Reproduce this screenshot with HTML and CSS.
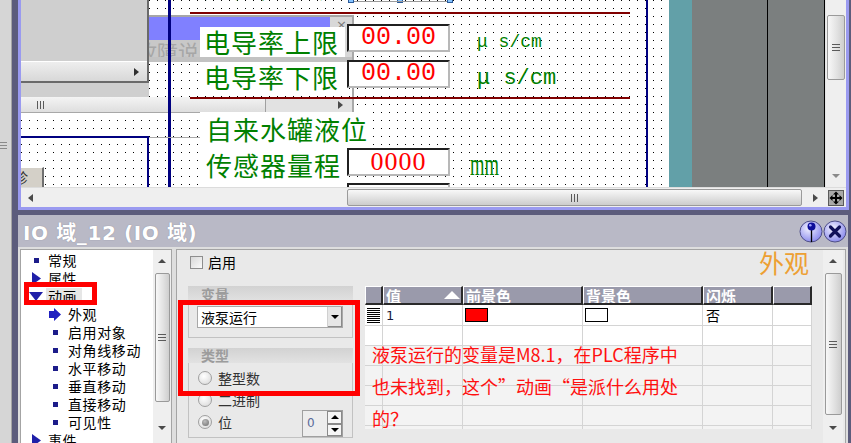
FILE: index.html
```html
<!DOCTYPE html>
<html lang="zh-CN">
<head>
<meta charset="UTF-8">
<title>IO 域_12 (IO 域)</title>
<link rel="stylesheet" href="styles.css">
</head>
<body>
<div class="app">
  <div class="dock"><span class="dock-grip"></span></div>
  <div class="main">
    <div class="editor">
      <div class="editor-row">
        <div class="canvas">
          <div class="obj top-title">运行情况说明</div>
          <span class="obj handle hd1"></span>
          <span class="obj handle hd2"></span>
          <span class="obj handle hd3"></span>
          <div class="obj sel-line"></div>

          <!-- screen window behind -->
          <div class="obj fwin-top"></div>
          <div class="obj fwin-bar"></div>
          <div class="obj fwin-close">×</div>
          <div class="obj fwin-text">故障说明</div>
          <div class="obj fwin-band"></div>
          <div class="obj fwin-vline"></div>
          <div class="obj fwin-scroll">
            <div class="fwin-thumb"><i class="grip-v"></i></div>
            <i class="tri right"></i>
          </div>

          <div class="obj gray-panel">
            <div class="gp-win"><div class="gp-scroll"><i class="tri right dark"></i></div></div>
          </div>

          <div class="obj label l1">电导率上限</div>
          <div class="obj label l2">电导率下限</div>
          <div class="obj label l4">传感器量程</div>
          <div class="obj label l3">自来水罐液位</div>

          <div class="obj io f1">00.00</div>
          <div class="obj io f2">00.00</div>
          <div class="obj io f3">0000</div>
          <div class="obj io f4"></div>

          <div class="obj unit u1">μ s/cm</div>
          <div class="obj unit u2">μ s/cm</div>
          <div class="obj unit u3">mm</div>

          <div class="obj rule r1"></div>
          <div class="obj rule r2"></div>

          <div class="obj diag-btn">诊</div>

          <div class="obj navy nv1"></div>
          <div class="obj navy nv2"></div>
          <div class="obj navy nh1"></div>
          <div class="obj navy nv3"></div>
          <div class="obj gline"></div>
        </div>
        <div class="teal"></div>
        <div class="outside"></div>
        <div class="vbar ed-vbar">
          <div class="arrow-box top"></div>
          <div class="thumb"><i class="grip-h"></i></div>
          <div class="spacer"></div>
          <div class="arrow-box"><i class="tri down light"></i></div>
        </div>
      </div>
      <div class="hscroll">
        <div class="harrow"><i class="tri left"></i></div>
        <div class="htrack"><div class="hthumb"><i class="grip-v"></i></div></div>
        <div class="harrow"><i class="tri right"></i></div>
        <div class="corner">
          <svg width="16" height="16" viewBox="0 0 16 16">
            <rect x="0.5" y="0.5" width="15" height="15" fill="#a9a9a9" stroke="#5a5a5a"/>
            <path d="M8 1.5 L11 4.5 H9 V7 H11.5 V5 L14.5 8 L11.5 11 V9 H9 V11.5 H11 L8 14.5 L5 11.5 H7 V9 H4.5 V11 L1.5 8 L4.5 5 V7 H7 V4.5 H5 Z" fill="#000"/>
          </svg>
        </div>
      </div>
    </div>

    <div class="props">
      <div class="props-title">
        <span class="props-name">IO 域_12 (IO 域)</span>
        <div class="title-btns">
          <svg width="24" height="23" viewBox="0 0 24 23">
            <defs>
              <radialGradient id="ball" cx="0.4" cy="0.35" r="0.7">
                <stop offset="0" stop-color="#f2f2ff"/>
                <stop offset="1" stop-color="#8686ec"/>
              </radialGradient>
            </defs>
            <ellipse cx="12" cy="11.5" rx="11" ry="10.5" fill="url(#ball)" stroke="#4e4e88"/>
            <path d="M12.5 9 V22" stroke="#000" stroke-width="1.3"/>
            <circle cx="12.5" cy="6.5" r="4" fill="#0c0c9a"/>
            <circle cx="11.3" cy="5.3" r="1.3" fill="#a0a0ff"/>
          </svg>
          <svg width="24" height="23" viewBox="0 0 24 23">
            <ellipse cx="12" cy="11.5" rx="11" ry="10.5" fill="url(#ball)" stroke="#4e4e88"/>
            <path d="M7.5 7 L16.5 16 M16.5 7 L7.5 16" stroke="#10105a" stroke-width="3.2" stroke-linecap="round"/>
          </svg>
        </div>
      </div>

      <div class="props-body">
        <div class="tree">
          <ul class="tree-list">
            <li class="node"><span class="ico"><i class="bullet"></i></span>常规</li>
            <li class="node"><span class="ico"><svg width="9" height="13" viewBox="0 0 9 13"><path d="M0 0 L9 6.5 L0 13 Z" fill="#1f1fa8"/></svg></span>属性</li>
            <li class="node sel"><span class="ico"><svg width="14" height="9" viewBox="0 0 14 9"><path d="M0 0 H14 L7 9 Z" fill="#1f1fa8"/></svg></span><span class="lbl">动画</span></li>
            <li class="node sub"><span class="ico"><svg width="12" height="13" viewBox="0 0 12 13"><path d="M0 3 H5 V0 L12 6.5 L5 13 V10 H0 Z" fill="#2020c0"/></svg></span>外观</li>
            <li class="node sub"><span class="ico"><i class="bullet"></i></span>启用对象</li>
            <li class="node sub"><span class="ico"><i class="bullet"></i></span>对角线移动</li>
            <li class="node sub"><span class="ico"><i class="bullet"></i></span>水平移动</li>
            <li class="node sub"><span class="ico"><i class="bullet"></i></span>垂直移动</li>
            <li class="node sub"><span class="ico"><i class="bullet"></i></span>直接移动</li>
            <li class="node sub"><span class="ico"><i class="bullet"></i></span>可见性</li>
            <li class="node"><span class="ico"><svg width="9" height="13" viewBox="0 0 9 13"><path d="M0 0 L9 6.5 L0 13 Z" fill="#1f1fa8"/></svg></span>事件</li>
          </ul>
          <div class="vbar tree-vbar">
            <div class="arrow-box top"><i class="tri up"></i></div>
            <div class="thumb"><i class="grip-h"></i></div>
            <div class="spacer"></div>
            <div class="arrow-box"><i class="tri down"></i></div>
          </div>
          <div class="mark tree-mark"></div>
        </div>

        <div class="pane">
          <div class="pane-main">
            <div class="pane-head">
              <label class="check"><span class="box"></span>启用</label>
              <h2 class="pane-title">外观</h2>
            </div>
            <div class="pane-cols">
              <div class="groups">
                <section class="group g-var">
                  <h3 class="group-head">变量</h3>
                  <div class="group-body">
                    <div class="combo"><span>液泵运行</span><b class="combo-btn"><i class="tri down dark"></i></b></div>
                  </div>
                </section>
                <section class="group g-type">
                  <h3 class="group-head">类型</h3>
                  <div class="group-body">
                    <div class="radio-row"><span class="radio"></span>整型数</div>
                    <div class="radio-row"><span class="radio"></span>二进制</div>
                    <div class="radio-row"><span class="radio on"></span>位
                      <div class="spin">
                        <span class="spin-val">0</span>
                        <span class="spin-btns"><b><i class="tri up dark"></i></b><b><i class="tri down dark"></i></b></span>
                      </div>
                    </div>
                  </div>
                </section>
              </div>
              <div class="grid-wrap">
                <table class="grid">
                  <colgroup><col class="c0"><col class="c1"><col class="c2"><col class="c3"><col class="c4"><col class="c5"></colgroup>
                  <thead>
                    <tr><th></th><th><div class="th-in">值<i class="sort"></i></div></th><th>前景色</th><th>背景色</th><th>闪烁</th><th></th></tr>
                  </thead>
                  <tbody>
                    <tr class="filled"><td><span class="row-mark"></span></td><td class="num">1</td><td><span class="swatch red"></span></td><td><span class="swatch"></span></td><td class="txt">否</td><td></td></tr>
                    <tr class="filled"><td></td><td></td><td></td><td></td><td></td><td></td></tr>
                    <tr><td></td><td></td><td></td><td></td><td></td><td></td></tr>
                    <tr><td></td><td></td><td></td><td></td><td></td><td></td></tr>
                    <tr><td></td><td></td><td></td><td></td><td></td><td></td></tr>
                    <tr><td></td><td></td><td></td><td></td><td></td><td></td></tr>
                    <tr><td></td><td></td><td></td><td></td><td></td><td></td></tr>
                  </tbody>
                </table>
              </div>
            </div>
            <div class="mark pane-mark"></div>
            <p class="note">液泵运行的变量是M8.1，在PLC程序中<br>也未找到，这个”动画“是派什么用处<br>的？</p>
          </div>
          <div class="vbar pane-vbar">
            <div class="arrow-box top"><i class="tri up"></i></div>
            <div class="thumb"><i class="grip-h"></i></div>
            <div class="spacer"></div>
            <div class="arrow-box"><i class="tri down"></i></div>
          </div>
        </div>
      </div>
    </div>
  </div>
</div>
</body>
</html>
```

FILE: styles.css
```css
* { box-sizing: border-box; }
body { margin: 0; width: 851px; height: 443px; overflow: hidden; background: #d6d6d6; font-family: "DejaVu Sans", "Noto Sans CJK SC", sans-serif; font-size: 13px; color: #000; }
ul, h2, h3, p { margin: 0; padding: 0; }
i { display: block; }

.app { display: flex; height: 443px; }
.dock { width: 12px; flex: none; background: #d6d6d6; border-right: 1px solid #a4a4a4; padding-top: 142px; }
.dock-grip { display: block; width: 7px; height: 7px; background: repeating-linear-gradient(#8a8a8a 0 1px, transparent 1px 3px); }
.main { width: 839px; flex: none; background: #5c5c7c; padding: 0 2px 0 6px; display: flex; flex-direction: column; }

/* screen editor */
.editor { height: 210px; flex: none; border: 3px solid #9a9af0; border-top: 0; display: flex; flex-direction: column; }
.editor-row { display: flex; height: 187px; }
.canvas { width: 648px; flex: none; position: relative; overflow: hidden; background: #fff conic-gradient(at 1px 1px, transparent 75%, #000 0) 0 0 / 8px 8px; }
.teal { width: 23px; flex: none; background: #62a0a8; }
.outside { width: 133px; flex: none; border-right: 1px solid #000; background: linear-gradient(#000, #000) 75px 0 / 1px 100% no-repeat, #7b7f7f; }

.obj { position: absolute; }
.top-title { left: 183px; top: -28px; font: 26px/30px "Noto Sans CJK SC", sans-serif; color: #008000; letter-spacing: 1px; white-space: nowrap; }
.handle { top: -2px; width: 6px; height: 5px; background: #86c4ff; border: 1px solid #2a5a9a; }
.hd1 { left: 327px; }
.hd2 { left: 376px; }
.hd3 { left: 426px; }
.sel-line { left: 333px; top: 1px; width: 93px; height: 1px; background: #9a9a9a; }

.fwin-top { left: 127px; top: 15px; width: 204px; height: 2px; background: #a6a6a6; }
.fwin-bar { left: 127px; top: 17px; width: 182px; height: 23px; background: #8080ff; }
.fwin-close { left: 309px; top: 17px; width: 22px; height: 45px; background: #d8d8d8; color: #7a7a7a; font-size: 13px; line-height: 16px; padding-left: 6px; }
.fwin-text { left: 115px; top: 40px; width: 194px; height: 22px; background: #c8c8c8; color: #a6a6a6; font: 21px/22px "Noto Sans CJK SC", sans-serif; white-space: nowrap; overflow: hidden; }
.fwin-band { left: 127px; top: 57px; width: 204px; height: 5px; background: #c2c2c2; }
.fwin-vline { left: 331px; top: 15px; width: 2px; height: 98px; background: #a8a8a8; }
.fwin-scroll { left: 0; top: 97px; width: 331px; height: 16px; background: #e2e2e2; border-bottom: 1px solid #a8a8a8; display: flex; align-items: center; }
.fwin-thumb { width: 245px; height: 15px; background: linear-gradient(#f4f4f4, #dedede); border-right: 1px solid #a0a0a0; padding-left: 16px; display: flex; align-items: center; }
.fwin-scroll .tri { margin-left: auto; margin-right: 9px; }

.gray-panel { left: 0; top: 0; width: 128px; height: 97px; background: #cfcfcf; }
.gp-win { height: 83px; border-right: 2px solid #6a6a6a; border-bottom: 2px solid #6a6a6a; padding-top: 61px; }
.gp-scroll { height: 20px; background: linear-gradient(#eeeeee, #d8d8d8); border-top: 1px solid #fff; display: flex; align-items: center; justify-content: flex-end; padding-right: 8px; }

.label { background: #fff; color: #008000; font: 26px/30px "Noto Sans CJK SC", sans-serif; letter-spacing: 1px; white-space: nowrap; padding-left: 4px; }
.l1 { left: 179px; top: 27px; width: 145px; height: 30px; }
.l2 { left: 179px; top: 62px; width: 145px; height: 30px; }
.l3 { left: 179px; top: 112px; width: 170px; height: 33px; line-height: 33px; padding-left: 6px; }
.l4 { left: 179px; top: 145px; width: 145px; height: 42px; line-height: 40px; padding-left: 6px; }

.io { left: 326px; width: 103px; height: 28px; background: #fff; border: 2px solid; border-color: #202020 #b8b8b8 #b8b8b8 #202020; color: #ff0000; text-align: center; }
.f1, .f2 { font: 25px/24px "Liberation Mono", monospace; }
.f1 { top: 24px; }
.f2 { top: 60px; }
.f3 { top: 148px; font: 26px/24px "Liberation Serif", serif; letter-spacing: 1px; }
.f4 { top: 183px; }

.unit { color: #008000; white-space: nowrap; }
.u1 { left: 456px; top: 33px; font: 18px/18px "Liberation Mono", monospace; }
.u2 { left: 456px; top: 68px; font: 22px/22px "Liberation Mono", monospace; }
.u3 { left: 449px; top: 150px; font: 31px/30px "Liberation Serif", serif; transform: scaleX(0.6); transform-origin: left top; }

.rule { left: 169px; width: 440px; height: 2px; background: #800000; }
.r1 { top: 12px; }
.r2 { top: 97px; }

.diag-btn { left: 0; top: 167px; width: 23px; height: 20px; background: #d4d0c8; border-top: 1px solid #fff; border-right: 2px solid #707070; overflow: hidden; font: 14px/19px "Noto Sans CJK SC", sans-serif; color: #333; text-indent: -7px; white-space: nowrap; }

.navy { background: #000080; }
.nv1 { left: 147px; top: 0; width: 3px; height: 187px; }
.nv2 { left: 625px; top: 0; width: 2px; height: 187px; }
.nh1 { left: 0; top: 136px; width: 128px; height: 2px; }
.nv3 { left: 126px; top: 136px; width: 2px; height: 51px; }
.gline { left: 128px; top: 137px; width: 51px; height: 1px; background: #a8a8a8; }

/* scrollbars */
.vbar { flex: none; display: flex; flex-direction: column; align-items: center; background: #efefef; }
.arrow-box { height: 16px; width: 100%; flex: none; display: flex; align-items: center; justify-content: center; }
.arrow-box.top { height: 22px; }
.thumb { flex: none; border: 1px solid #9a9a9a; border-radius: 2px; background: linear-gradient(to right, #f8f8f8, #e2e2e2 55%, #cecece); display: flex; align-items: center; justify-content: center; }
.spacer { flex: none; }
.grip-h { width: 8px; height: 7px; background: repeating-linear-gradient(#5a5a5a 0 1px, transparent 1px 3px); }
.grip-v { width: 7px; height: 8px; background: repeating-linear-gradient(to right, #5a5a5a 0 1px, transparent 1px 3px); }

.ed-vbar { width: 21px; border-left: 1px solid #e4e4e4; }
.ed-vbar .arrow-box.top { height: 15px; }
.ed-vbar .thumb { width: 18px; height: 65px; }
.ed-vbar .spacer { flex: 1; }
.ed-vbar .arrow-box:last-child { margin-bottom: 3px; }

.tree-vbar { width: 18px; }
.tree-vbar .thumb { width: 15px; margin-top: 1px; height: 129px; }
.tree-vbar .spacer { height: 18px; }
.pane-vbar { width: 20px; margin-right: 2px; }
.pane-vbar .thumb { width: 17px; margin-top: 1px; height: 142px; }
.pane-vbar .spacer { height: 5px; }

.tri { width: 0; height: 0; border: 4px solid transparent; }
.tri.up { border-top: 0; border-bottom: 4px solid #4a4a4a; }
.tri.down { border-bottom: 0; border-top: 4px solid #4a4a4a; }
.tri.left { border-left: 0; border-right: 5px solid #4a4a4a; }
.tri.right { border-right: 0; border-left: 5px solid #4a4a4a; }
.tri.down.light { border-top-color: #8a8a8a; }
.tri.dark.down { border-top-color: #000; }
.tri.dark.up { border-bottom-color: #000; }
.tri.dark.right { border-left-color: #303030; }

.hscroll { height: 20px; flex: none; display: flex; background: #efefef; border-top: 1px solid #dcdcdc; }
.harrow { width: 19px; flex: none; display: flex; align-items: center; justify-content: center; }
.htrack { flex: 1; padding-top: 1px; }
.hthumb { margin-left: 307px; width: 455px; height: 17px; border: 1px solid #9a9a9a; border-radius: 2px; background: linear-gradient(#f8f8f8, #e0e0e0 55%, #cccccc); display: flex; align-items: center; justify-content: center; }
.corner { width: 21px; flex: none; display: flex; align-items: center; justify-content: center; }

/* properties window */
.props { flex: 1; min-height: 0; margin: 5px 1px 0 0; background: #dedede; display: flex; flex-direction: column; }
.props-title { height: 32px; flex: none; background: #b9b9c6; display: flex; align-items: center; padding: 0 1px 0 5px; }
.props-name { color: #fff; font: bold 20px "DejaVu Sans", "Noto Sans CJK SC", sans-serif; letter-spacing: 0.6px; text-shadow: 0 0 1px #7c7c8e; white-space: nowrap; }
.title-btns { margin-left: auto; display: flex; }

.props-body { display: flex; gap: 4px; padding: 2px 2px 0; }

.tree { width: 152px; height: 200px; flex: none; display: flex; background: #fff; border: 1px solid #a4a4a4; position: relative; }
.tree-list { flex: 1; list-style: none; padding: 1px 0 0 7px; }
.node { height: 18px; display: flex; align-items: center; font: 14px/18px "Noto Sans CJK SC", sans-serif; letter-spacing: 0.6px; white-space: nowrap; }
.ico { width: 16px; margin-right: 4px; flex: none; display: flex; align-items: center; justify-content: center; }
.node.sub { padding-left: 20px; }
.node.sub .ico { width: 14px; margin-right: 6px; }
.bullet { width: 5px; height: 5px; background: #1c1c8a; }
.sel .lbl { background: #e6e6e6; margin-left: -2px; padding: 0 5px 0 2px; line-height: 16px; }

.mark { position: absolute; border: 5px solid #ff0000; }
.tree-mark { left: 3px; top: 32px; width: 73px; height: 23px; }

.pane { width: 670px; height: 200px; flex: none; display: flex; background: #e9e9e9; border: 1px solid #a4a4a4; }
.pane-main { flex: 1; position: relative; padding-left: 11px; }
.pane-head { height: 36px; display: flex; align-items: flex-start; padding: 0 14px 0 2px; }
.check { display: flex; align-items: center; gap: 5px; margin-top: 5px; height: 14px; font: 14px "Noto Sans CJK SC", sans-serif; }
.check .box { width: 13px; height: 13px; border: 1px solid #8e8e8e; background: linear-gradient(135deg, #d8d8d8, #fbfbfb); }
.pane-title { margin-left: auto; font: normal 25px/25px "Noto Sans CJK SC", sans-serif; color: #eda033; }

.pane-cols { display: flex; gap: 12px; }
.groups { width: 165px; flex: none; }
.group { border: 1px solid #c2c2c2; border-top: 0; }
.group-head { height: 16px; margin: 0 -1px; padding-left: 13px; background: linear-gradient(#d2d2d2, #e2e2e2); color: #9c9c9c; font: bold 14px/16px "Noto Sans CJK SC", sans-serif; }
.g-var .group-body { padding: 4px 9px 9px 8px; }
.g-type { margin-top: 10px; }
.g-type .group-head { height: 15px; line-height: 15px; }
.g-type .group-body { height: 74px; padding: 4px 9px 0; }

.combo { height: 22px; display: flex; align-items: center; background: #fff; border: 1px solid #a8a8a8; padding-left: 3px; font: 14px "Noto Sans CJK SC", sans-serif; }
.combo-btn { margin-left: auto; width: 15px; height: 20px; background: #e6e6e6; border-left: 1px solid #d0d0d0; box-shadow: inset -1px -1px #8a8a8a; display: flex; align-items: center; justify-content: center; }

.radio-row { height: 22px; display: flex; align-items: center; gap: 6px; font: 14px "Noto Sans CJK SC", sans-serif; color: #333; }
.radio { width: 14px; height: 14px; flex: none; border-radius: 50%; border: 1px solid #a0a0a0; background: radial-gradient(circle at 40% 35%, #ffffff, #d6d6d6); display: flex; align-items: center; justify-content: center; }
.radio.on::after { content: ""; width: 7px; height: 7px; border-radius: 50%; background: radial-gradient(circle at 40% 35%, #bdbdbd, #6c6c6c); }

.spin { margin-left: auto; align-self: flex-start; margin-top: -1px; width: 41px; height: 27px; display: flex; border: 1px solid #a0a0a0; background: #ededed; }
.spin-val { flex: 1; padding-left: 4px; color: #5a6a9a; font: 12px/25px "DejaVu Sans", sans-serif; }
.spin-btns { width: 15px; display: flex; flex-direction: column; }
.spin-btns b { flex: 1; background: #f6f6f6; border: 1px solid #8a8a8a; display: flex; align-items: center; justify-content: center; }

.grid-wrap { width: 447px; height: 143px; overflow: hidden; background: #f3f3f3; }
.grid { width: 447px; table-layout: fixed; border-collapse: separate; border-spacing: 0; }
.c0 { width: 18px; }
.c1 { width: 80px; }
.c2 { width: 120px; }
.c3 { width: 120px; }
.c4 { width: 70px; }
.c5 { width: 39px; }
.grid th { height: 19px; padding: 0 0 0 2px; background: #9a9aab; border-top: 1px solid #fff; border-left: 1px solid #fff; border-right: 2px solid #2a2a2a; border-bottom: 2px solid #2a2a2a; color: #fff; font: bold 15px/15px "Noto Sans CJK SC", sans-serif; text-align: left; white-space: nowrap; overflow: hidden; }
.th-in { display: flex; align-items: center; }
.sort { margin-left: auto; margin-right: 1px; width: 0; height: 0; border-left: 8px solid transparent; border-right: 8px solid transparent; border-bottom: 8px solid #fff; }
.grid td { height: 20px; padding: 0 0 0 2px; border-right: 1px solid #d4d4d4; border-bottom: 1px solid #d4d4d4; font: 14px "Noto Sans CJK SC", sans-serif; }
.grid .filled td { background: #fff; }
.grid td.num { padding-left: 3px; color: #1a1a3a; font: 13px "DejaVu Sans", sans-serif; }
.grid td.txt { padding-left: 3px; }
.row-mark { display: block; width: 13px; height: 15px; background: repeating-linear-gradient(#000 0 1px, #fff 1px 2px); }
.swatch { display: block; width: 23px; height: 14px; border: 1px solid #000; background: #fff; }
.swatch.red { background: #ff0000; }

.pane-mark { left: 1px; top: 50px; width: 182px; height: 96px; }
.note { position: absolute; left: 195px; top: 88px; color: #ff1010; font: 18px/32px "Noto Sans CJK SC", sans-serif; white-space: nowrap; }
```
